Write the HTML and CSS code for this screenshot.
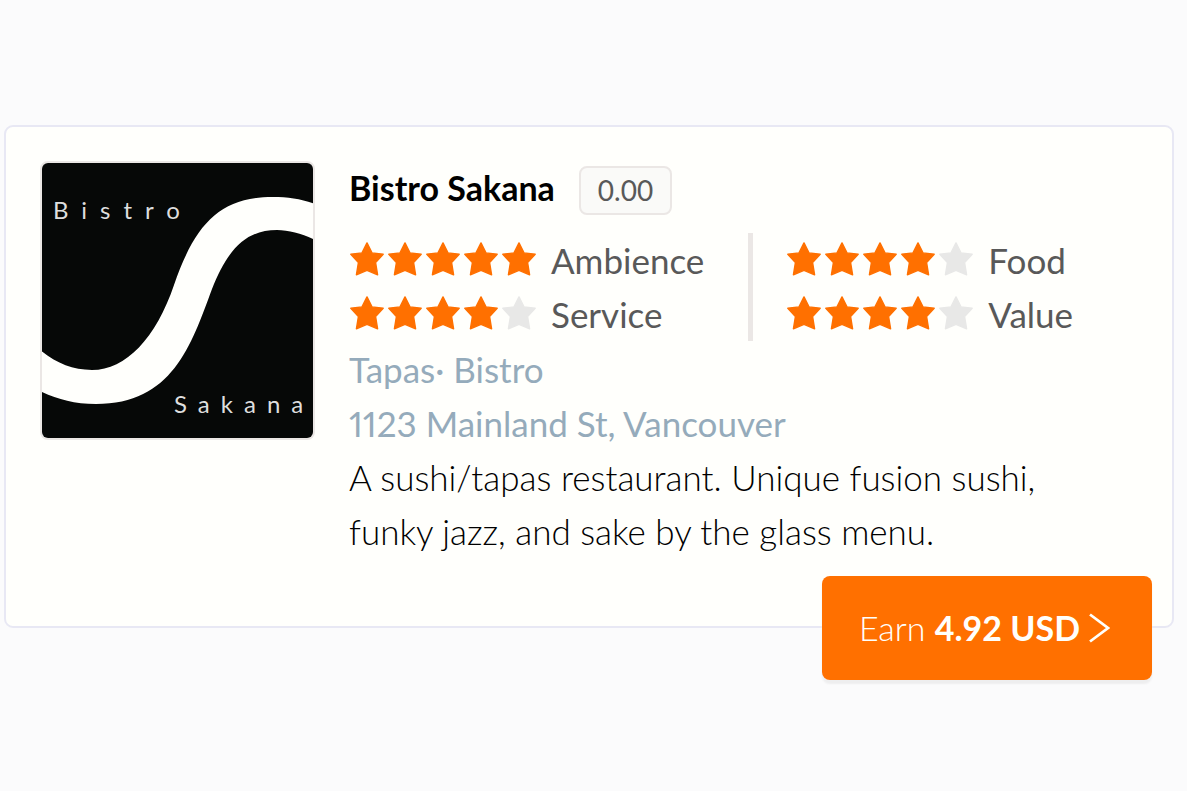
FILE: index.html
```html
<!DOCTYPE html>
<html lang="en">
<head>
<meta charset="utf-8">
<meta name="viewport" content="width=device-width, initial-scale=1">
<title>Bistro Sakana</title>
<link rel="stylesheet" href="styles.css">
</head>
<body>
<svg class="defs" aria-hidden="true">
  <symbol id="star" viewBox="0 0 34 34"><path d="M17 .9 L22 10.9 L33.2 12.2 L25.6 20.6 L27.6 32.8 L17 28.3 L6.4 32.8 L8.4 20.6 L.8 12.2 L12 10.9Z" fill="currentColor" stroke="currentColor" stroke-width="1.4" stroke-linejoin="round"/></symbol>
</svg>
<main class="page">
  <article class="card">
    <svg class="logo" viewBox="0 0 271 275" role="img" aria-label="Bistro Sakana logo">
      <rect width="271" height="275" fill="#060807"/>
      <path d="M-2 187 C14 200 30 207 50 207 C84 207 114 175 132 122 C153 61 178 34 231 34 C246 34 260 36 273 41 V77 C261 71 247 67 235 67 C205 67 186 85 170 126 C149 183 130 241 54 241 C32 241 15 236 -2 228Z" fill="#fffffc"/>
      <text class="logo-text logo-text-wide" x="11" y="56">Bistro</text>
      <text class="logo-text" x="132" y="250">Sakana</text>
    </svg>
    <div class="info">
      <header class="heading">
        <h1 class="name">Bistro Sakana</h1>
        <span class="score">0.00</span>
      </header>
      <div class="ratings">
        <div class="rating-group">
          <div class="rating"><span class="stars" role="img" aria-label="5 of 5"><svg class="star"><use href="#star"/></svg><svg class="star"><use href="#star"/></svg><svg class="star"><use href="#star"/></svg><svg class="star"><use href="#star"/></svg><svg class="star"><use href="#star"/></svg></span><span>Ambience</span></div>
          <div class="rating"><span class="stars" role="img" aria-label="4 of 5"><svg class="star"><use href="#star"/></svg><svg class="star"><use href="#star"/></svg><svg class="star"><use href="#star"/></svg><svg class="star"><use href="#star"/></svg><svg class="star star-empty"><use href="#star"/></svg></span><span>Service</span></div>
        </div>
        <div class="rating-group">
          <div class="rating"><span class="stars" role="img" aria-label="4 of 5"><svg class="star"><use href="#star"/></svg><svg class="star"><use href="#star"/></svg><svg class="star"><use href="#star"/></svg><svg class="star"><use href="#star"/></svg><svg class="star star-empty"><use href="#star"/></svg></span><span>Food</span></div>
          <div class="rating"><span class="stars" role="img" aria-label="4 of 5"><svg class="star"><use href="#star"/></svg><svg class="star"><use href="#star"/></svg><svg class="star"><use href="#star"/></svg><svg class="star"><use href="#star"/></svg><svg class="star star-empty"><use href="#star"/></svg></span><span>Value</span></div>
        </div>
      </div>
      <p class="meta">Tapas· Bistro</p>
      <p class="meta">1123 Mainland St, Vancouver</p>
      <p class="description">A sushi/tapas restaurant. Unique fusion sushi, funky jazz, and sake by the glass menu.</p>
    </div>
    <button class="earn" type="button">
      <span>Earn <strong>4.92 USD</strong></span>
      <svg class="chevron" viewBox="0 0 21 30" aria-hidden="true"><path d="M1 1.5 L19 15 L1 28.5" fill="none" stroke="currentColor" stroke-width="2.8"/></svg>
    </button>
  </article>
</main>
</body>
</html>
```
FILE: styles.css
```css
* {
  box-sizing: border-box;
}

body {
  margin: 0;
  background: #fbfbfc;
  color: #000;
  font-family: Lato, "Open Sans", sans-serif;
  font-size: 35px;
  line-height: 54px;
}

.defs {
  position: absolute;
  width: 0;
  height: 0;
}

.page {
  padding: 125px 13px 100px 4px;
}

.card {
  position: relative;
  display: flex;
  align-items: flex-start;
  gap: 34px;
  padding: 34px 68px 68px 34px;
  background: #fffffc;
  border: 2px solid #e8e8f4;
  border-radius: 9px;
}

.logo {
  flex: none;
  width: 275px;
  border: 2px solid #ebe7e5;
  border-radius: 8px;
}

.logo-text {
  fill: #dedede;
  font-family: Lato, sans-serif;
  font-size: 24px;
  letter-spacing: 11px;
}

.logo-text-wide {
  letter-spacing: 13px;
}

.info {
  flex: 1;
  min-width: 0;
}

.heading {
  display: flex;
  align-items: center;
  gap: 24px;
  margin-bottom: 18px;
}

.name {
  margin: 0;
  font-size: 34px;
  font-weight: 700;
}

.score {
  margin-top: 4px;
  padding: 0 17px;
  background: #fafaf8;
  border: 2px solid #ebe7e5;
  border-radius: 8px;
  color: #595959;
  font-size: 28px;
  line-height: 45px;
}

.ratings {
  display: flex;
  margin-bottom: 1px;
  color: #595959;
}

.rating-group {
  padding-left: 1px;
}

.rating-group + .rating-group {
  margin-left: 44px;
  padding-left: 34px;
  border-left: 5px solid #ebe7e5;
}

.rating {
  display: flex;
  align-items: center;
  gap: 15px;
}

.stars {
  display: flex;
  gap: 4px;
  padding-bottom: 2px;
  color: #ff7000;
}

.star {
  width: 34px;
  height: 34px;
}

.star-empty {
  color: #e8e8e7;
}

.meta,
.description {
  margin: 0;
}

.meta {
  color: #95abbb;
  font-variant-numeric: proportional-nums;
}

.description {
  font-weight: 300;
}

.earn {
  position: absolute;
  right: 20px;
  bottom: -54px;
  display: flex;
  align-items: center;
  gap: 9px;
  padding: 25px 42px 25px 37px;
  background: #ff7000;
  border: 0;
  border-radius: 8px;
  box-shadow: 0 4px 2px #eeeeef;
  color: #fffffc;
  font: inherit;
  font-size: 34px;
  font-weight: 300;
}

.earn strong {
  font-weight: 700;
}

.chevron {
  width: 21px;
  height: 30px;
}
```
